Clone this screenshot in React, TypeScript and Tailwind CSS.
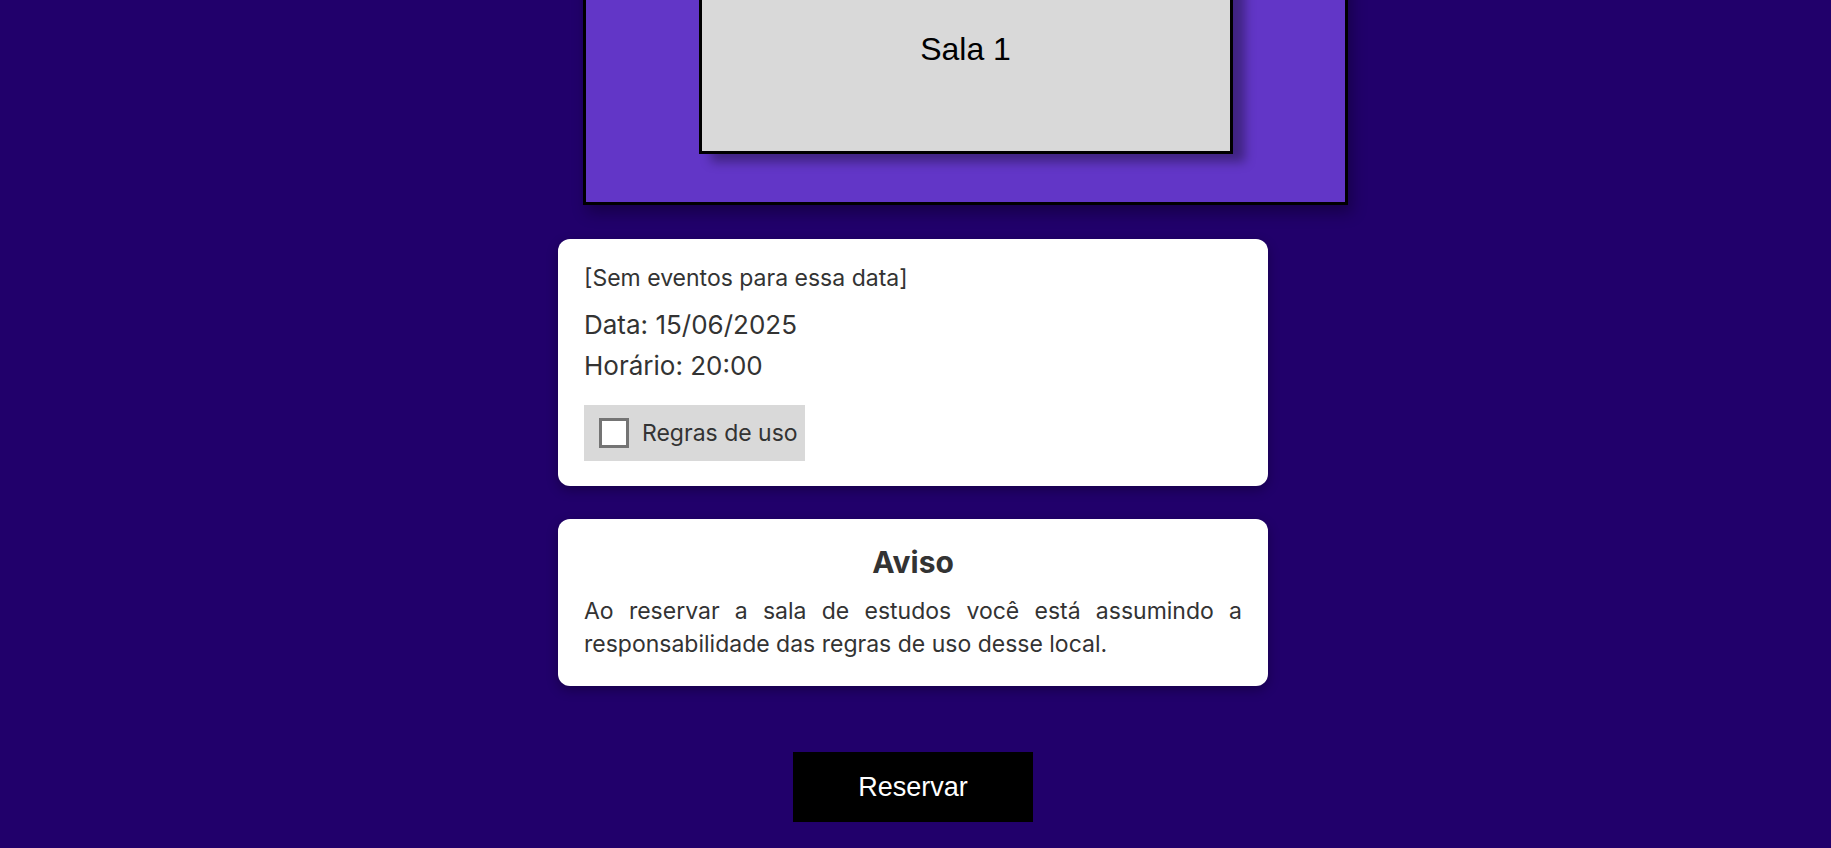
import { useState } from 'react';

export default function App() {
  const [accepted, setAccepted] = useState(false);

  return (
    <div className="min-h-screen overflow-hidden bg-[#21006b] flex flex-col items-center pr-[5px] pb-[40px] font-['Inter',sans-serif] text-[#333]">
      {/* Room preview */}
      <div className="w-full flex justify-center pl-[105px] -mt-[101px]">
        <div className="w-[765px] border-[3px] border-black bg-[#6236c7] pt-[40px] pb-[48px] flex justify-center shadow-[4px_8px_14px_rgba(0,0,0,0.3)]">
          <div className="w-[534px] h-[212px] pt-[2px] border-[3px] border-black bg-[#d9d9d9] flex items-center justify-center shadow-[12px_8px_10px_rgba(0,0,0,0.35)]">
            <span className="font-['Liberation_Sans',Arial,sans-serif] text-[32px] text-black">Sala 1</span>
          </div>
        </div>
      </div>

      {/* Booking info */}
      <div className="mt-[34px] w-[710px] bg-white rounded-[12px] px-[26px] pt-[24px] pb-[25px] shadow-[0_4px_12px_rgba(0,0,0,0.3)]">
        <p className="text-[23px] leading-[30px]">[Sem eventos para essa data]</p>
        <p className="mt-[11px] text-[26px] leading-[41px]">Data: 15/06/2025</p>
        <p className="text-[26px] leading-[41px]">Horário: 20:00</p>
        <label className="mt-[19px] flex w-fit h-[56px] items-center gap-[13px] pl-[15px] pr-[7px] bg-[#d9d9d9] cursor-pointer">
          <input
            type="checkbox"
            checked={accepted}
            onChange={(e) => setAccepted(e.target.checked)}
            className="appearance-none w-[30px] h-[30px] border-[3px] border-[#747474] bg-white checked:bg-[#6236c7]"
          />
          <span className="text-[23px] leading-[30px]">Regras de uso</span>
        </label>
      </div>

      {/* Notice */}
      <div className="mt-[33px] w-[710px] bg-white rounded-[12px] px-[26px] pt-[25px] pb-[25px] shadow-[0_4px_12px_rgba(0,0,0,0.3)]">
        <h2 className="text-center text-[30px] leading-[36px] font-bold">Aviso</h2>
        <p className="mt-[15px] text-[23px] leading-[33px] text-justify">
          Ao reservar a sala de estudos você está assumindo a responsabilidade das regras de uso desse local.
        </p>
      </div>

      <button className="mt-[66px] w-[240px] h-[70px] bg-black text-white text-[27px] font-['Liberation_Sans',Arial,sans-serif]">
        Reservar
      </button>
    </div>
  );
}
